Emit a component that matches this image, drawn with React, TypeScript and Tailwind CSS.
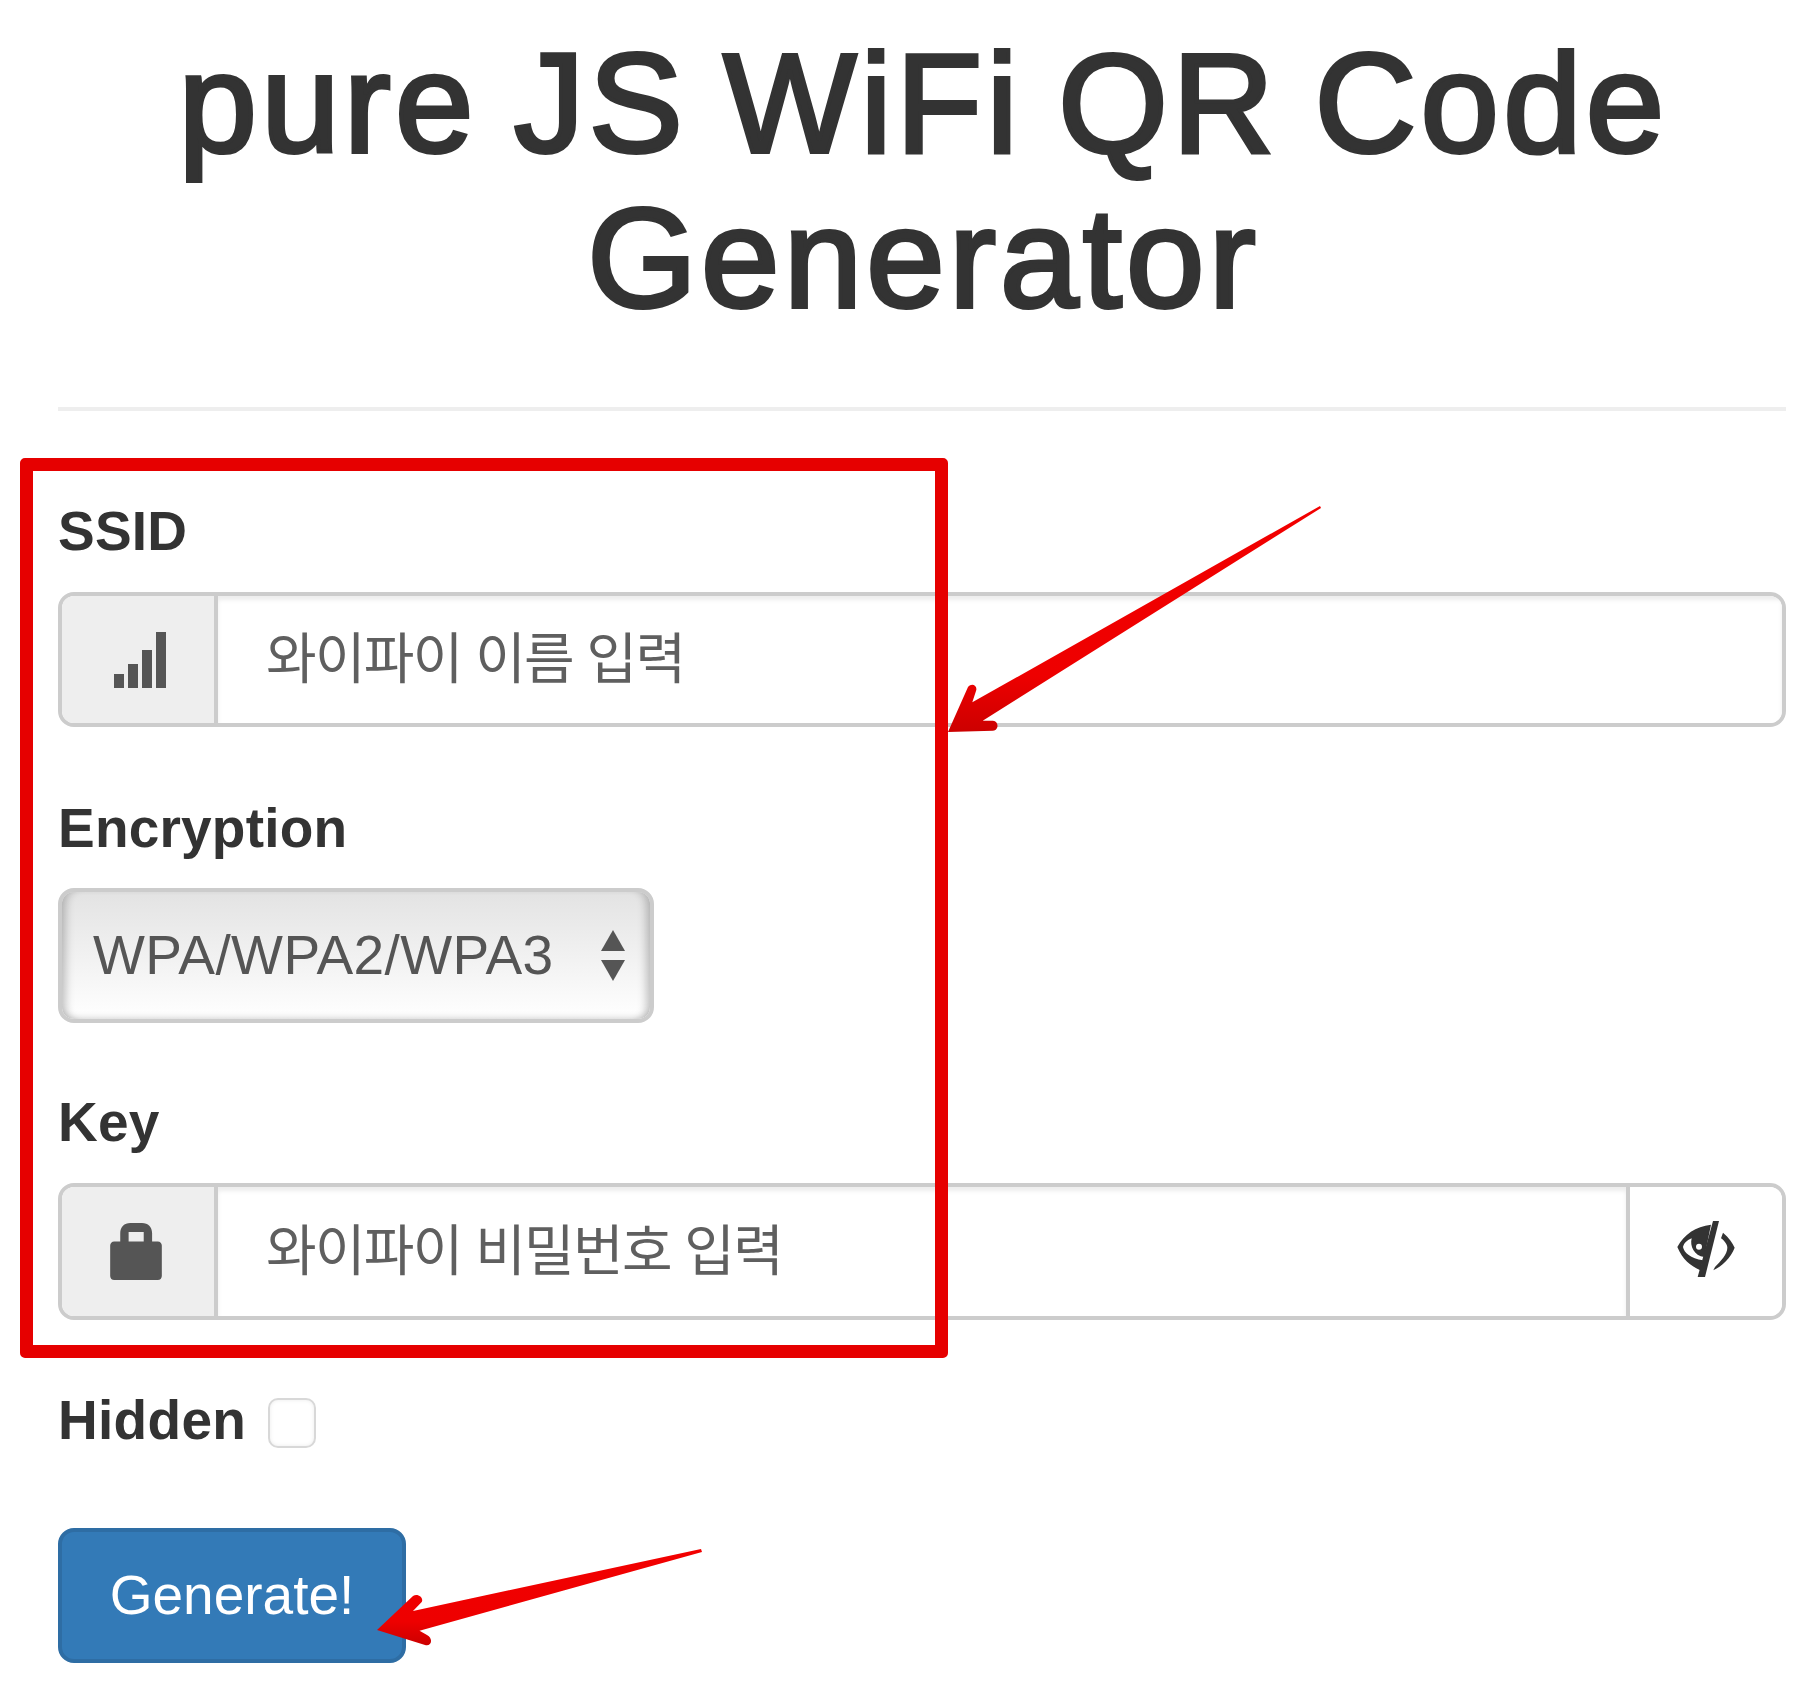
const labelClass = "block h-[78px] text-[55px] leading-[76px] font-bold text-[#333] tracking-[0.2px]";
const fieldClass =
  "min-w-0 flex-1 bg-white px-[48px] text-[55px] tracking-[-1.7px] text-[#555] outline-none shadow-[inset_0_4px_4px_rgba(0,0,0,0.075)] placeholder:text-[#5f5f5f] [font-family:'Liberation_Sans','Noto_Sans_CJK_KR',sans-serif]";

const SignalIcon = () => (
  <svg className="ml-[4px]" width="52" height="56" viewBox="0 0 52 56" fill="#555">
    <rect x="0" y="42" width="10" height="14" />
    <rect x="14" y="32" width="10" height="24" />
    <rect x="28" y="18" width="10" height="38" />
    <rect x="42" y="0" width="10" height="56" />
  </svg>
);

const LockIcon = () => (
  <svg className="mr-[4px]" width="52" height="57" viewBox="0 0 154 170" fill="#555">
    <path
      fillRule="evenodd"
      d="M30 55V30C30 12 42 0 60 0H95C113 0 125 12 125 30V55H142C149 55 154 60 154 67V158C154 165 149 170 142 170H12C5 170 0 165 0 158V67C0 60 5 55 12 55ZM55 27V55H100V27Z"
    />
  </svg>
);

const EyeOffIcon = () => (
  <svg className="mb-[6px]" width="58" height="56" viewBox="175 120 172 168" fill="#333">
    <path
      fillRule="evenodd"
      d="M276 131C230 136 195 160 175 198C190 235 215 255 244 268L252 238C215 232 195 215 192 198C195 185 205 178 218 172C212 195 225 225 256 228ZM240 188A9 9 0 1 0 240 206A9 9 0 1 0 240 188Z"
    />
    <path d="M282 120H300L258 288H236Z" />
    <path d="M312 155C330 170 340 185 347 200C335 230 310 255 283 268L288 258C305 240 325 220 325 200C325 190 315 178 306 172Z" />
  </svg>
);

const Addon = ({ side, children }: { side: "left" | "right"; children: React.ReactNode }) => (
  <div
    className={
      side === "left"
        ? "flex w-[156px] shrink-0 items-center justify-center border-r-4 border-[#ccc] bg-[#eee]"
        : "flex w-[156px] shrink-0 items-center justify-center border-l-4 border-[#ccc] bg-white"
    }
  >
    {children}
  </div>
);

// annotation layer drawn over the form
const Annotations = () => (
  <>
    <div className="absolute left-[20px] top-[458px] h-[900px] w-[928px] rounded-[5px] border-[13px] border-[#e60000]" />
    <svg className="absolute left-0 top-0" width="1802" height="1708" viewBox="0 0 1802 1708">
      <defs>
        <linearGradient id="arrowRed" x1="0" y1="0" x2="0" y2="1">
          <stop offset="0" stopColor="#f20000" />
          <stop offset="0.75" stopColor="#ee0000" />
          <stop offset="1" stopColor="#cc0000" />
        </linearGradient>
      </defs>
      <path
        fill="url(#arrowRed)"
        d="M1320 506L1321 508L982.7 720.7L993 720.7C999 721 999 730.5 993 730.7L948 732L968 687C972 682 978 686 976 691L972.3 702.3Z"
      />
      <path
        fill="url(#arrowRed)"
        d="M701 1549L702 1552L419.5 1630.7L427 1635C434 1639 431 1647 425 1645L377 1630L413 1596C418 1593 424 1598 421.7 1602L413 1611Z"
      />
    </svg>
  </>
);

export default function App() {
  return (
    <div className="relative h-[1708px] w-full overflow-hidden bg-white pl-[58px] pr-[16px] pt-[26px] [font-family:'Liberation_Sans',sans-serif]">
      <h1 className="pl-[3px] text-center text-[141px] leading-[155px] font-normal tracking-[4.2px] [word-spacing:-7px] text-[#333] [-webkit-text-stroke:4px_#333]">
        pure JS WiFi QR Code Generator
      </h1>
      <hr className="mt-[71px] mb-[82px] h-[4px] border-0 bg-[#eee]" />

      <div className="flex flex-col">
        <div>
          <label className={labelClass}>SSID</label>
          <div className="mt-[21px] flex h-[135px] overflow-hidden rounded-[16px] border-4 border-[#ccc]">
            <Addon side="left">
              <SignalIcon />
            </Addon>
            <input className={fieldClass} placeholder="와이파이 이름 입력" />
          </div>
        </div>

        <div className="mt-[63px]">
          <label className={labelClass}>Encryption</label>
          <div className="mt-[20px] flex h-[135px] w-[596px] items-center justify-between rounded-[16px] border-4 border-[#ccc] bg-gradient-to-b from-[#e3e3e3] to-[#ffffff] pl-[31px] pr-[25px] shadow-[inset_10px_0_8px_-6px_rgba(0,0,0,0.22),inset_-10px_0_8px_-6px_rgba(0,0,0,0.22),inset_0_-6px_6px_-4px_rgba(0,0,0,0.12)]">
            <span className="text-[55px] tracking-[0.4px] text-[#555]">WPA/WPA2/WPA3</span>
            <svg width="24" height="51" viewBox="0 0 24 51" fill="#555">
              <path d="M12 0L24 21H0Z" />
              <path d="M0 30H24L12 51Z" />
            </svg>
          </div>
        </div>

        <div className="mt-[61px]">
          <label className={labelClass}>Key</label>
          <div className="mt-[21px] flex h-[137px] overflow-hidden rounded-[16px] border-4 border-[#ccc]">
            <Addon side="left">
              <LockIcon />
            </Addon>
            <input className={fieldClass} placeholder="와이파이 비밀번호 입력" />
            <Addon side="right">
              <EyeOffIcon />
            </Addon>
          </div>
        </div>

        <div className="mt-[61px] flex h-[78px] items-center">
          <span className="text-[55px] leading-[76px] font-bold text-[#333] tracking-[0.3px]">Hidden</span>
          <input
            type="checkbox"
            className="ml-[22px] mt-[5px] h-[50px] w-[48px] appearance-none rounded-[10px] border-2 border-[#d8d8d8] bg-white shadow-[inset_0_0_4px_rgba(0,0,0,0.08)]"
          />
        </div>
      </div>

      <button className="mt-[69px] h-[135px] w-[348px] rounded-[16px] border-4 border-[#2e6da4] bg-[#337ab7] text-[55px] text-white">
        Generate!
      </button>

      <Annotations />
    </div>
  );
}
